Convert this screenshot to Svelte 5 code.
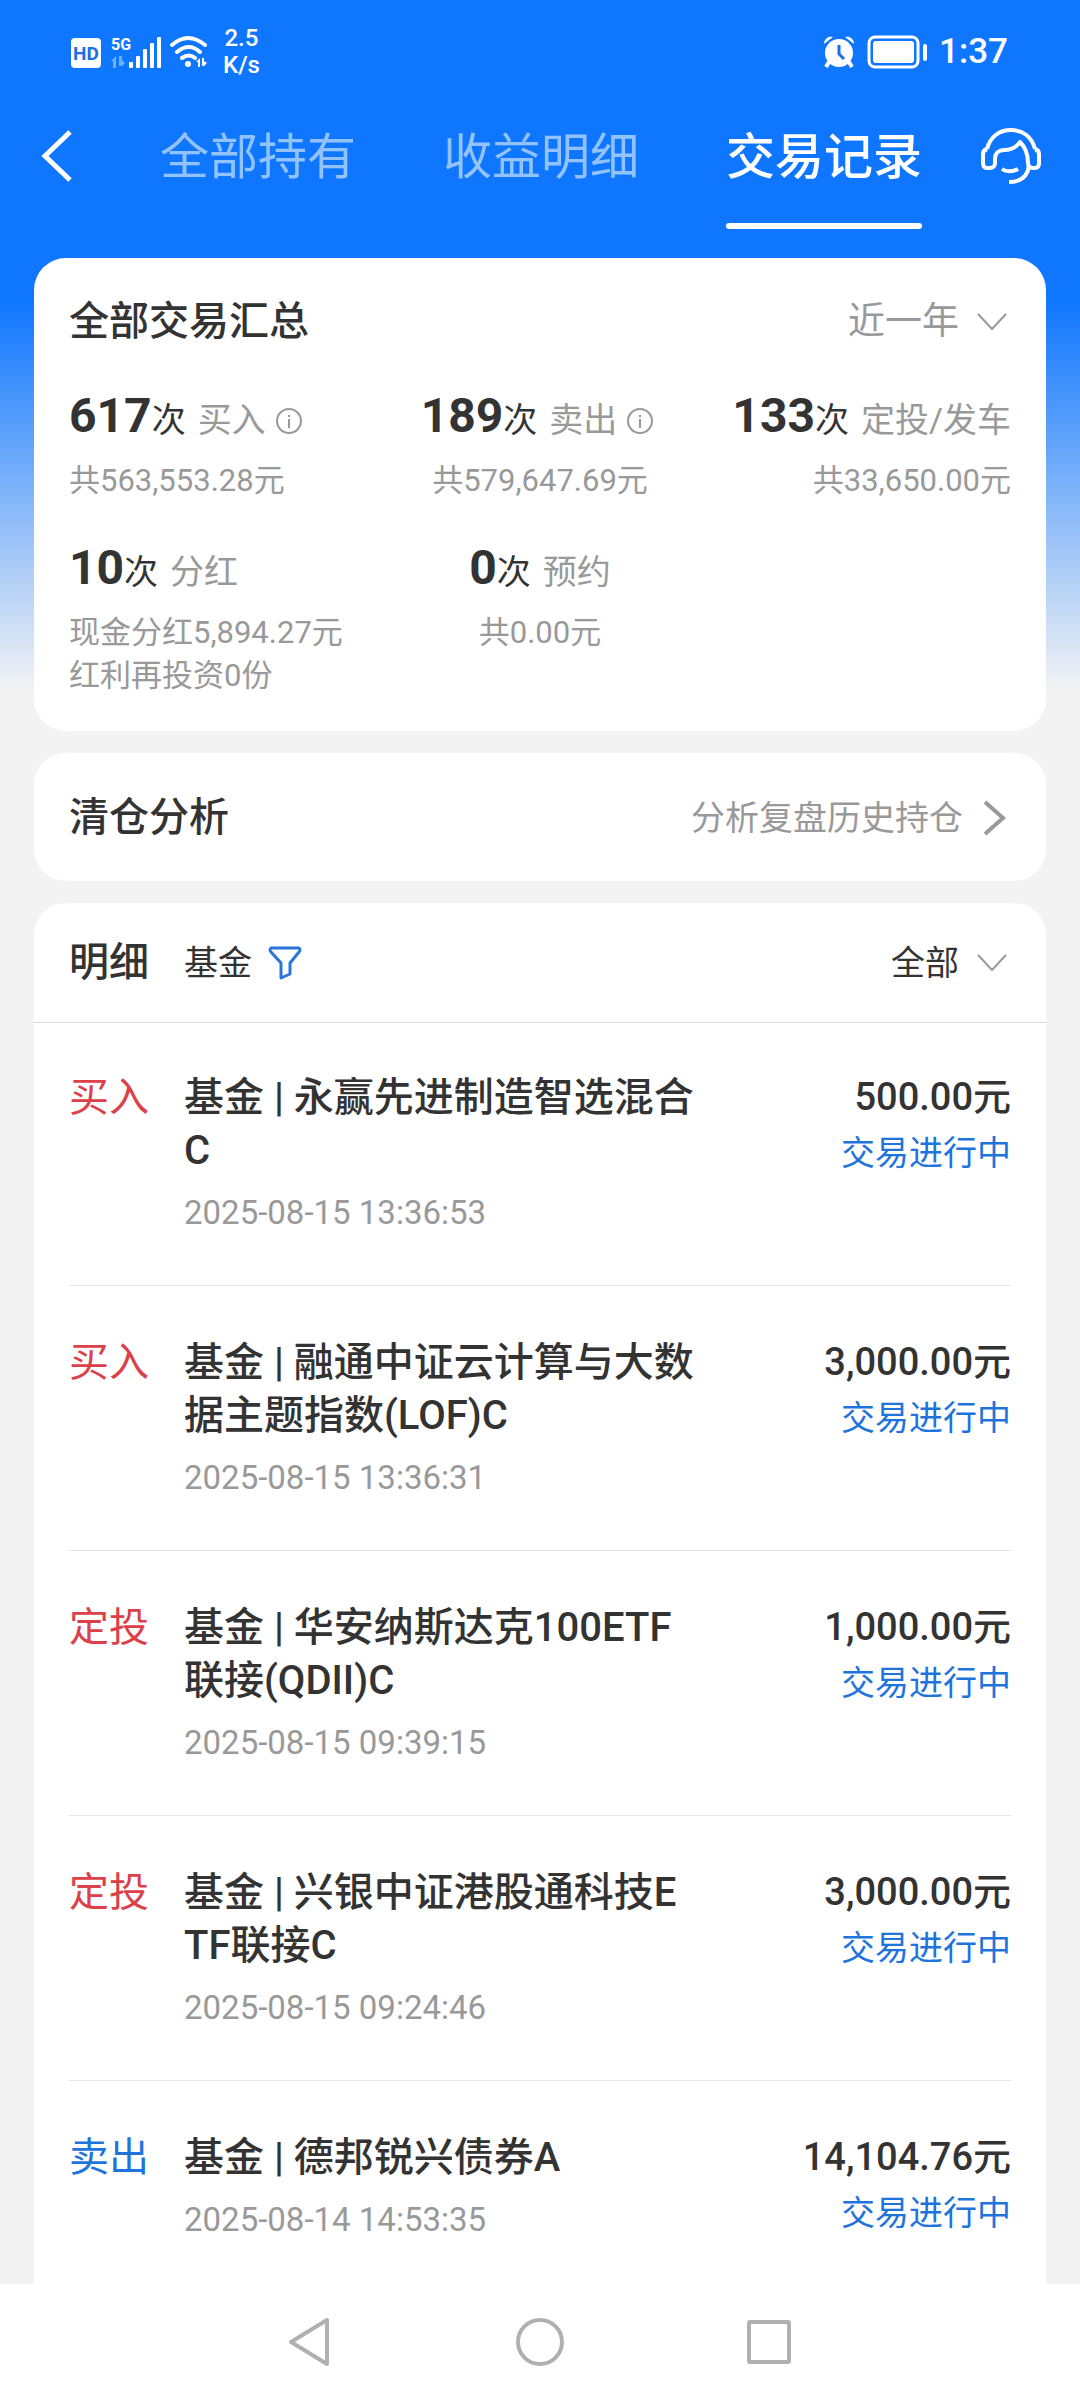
<script lang="ts">
	type Stat = { count: number; label: string; lines: string[]; info?: boolean };
	type Trade = { kind: string; name: string; time: string; amount: string; sell?: boolean };

	const tabs = ['全部持有', '收益明细', '交易记录'];
	let active = $state('交易记录');
	let range = $state('近一年');
	let filter = $state('全部');

	const stats: Stat[] = [
		{ count: 617, label: '买入', lines: ['共563,553.28元'], info: true },
		{ count: 189, label: '卖出', lines: ['共579,647.69元'], info: true },
		{ count: 133, label: '定投/发车', lines: ['共33,650.00元'] },
		{ count: 10, label: '分红', lines: ['现金分红5,894.27元', '红利再投资0份'] },
		{ count: 0, label: '预约', lines: ['共0.00元'] }
	];

	const trades: Trade[] = [
		{ kind: '买入', name: '永赢先进制造智选混合C', time: '2025-08-15 13:36:53', amount: '500.00' },
		{ kind: '买入', name: '融通中证云计算与大数据主题指数(LOF)C', time: '2025-08-15 13:36:31', amount: '3,000.00' },
		{ kind: '定投', name: '华安纳斯达克100ETF联接(QDII)C', time: '2025-08-15 09:39:15', amount: '1,000.00' },
		{ kind: '定投', name: '兴银中证港股通科技ETF联接C', time: '2025-08-15 09:24:46', amount: '3,000.00' },
		{ kind: '卖出', name: '德邦锐兴债券A', time: '2025-08-14 14:53:35', amount: '14,104.76', sell: true }
	];
</script>

{#snippet chevronDown()}
	<svg width="30" height="18" viewBox="0 0 30 18" fill="none" stroke="#999" stroke-width="2"><path d="M1 1l14 15L29 1" /></svg>
{/snippet}

<div class="page">
	<div class="status">
		<div class="status-side">
			<svg width="138" height="34" viewBox="0 0 138 34" fill="#fff">
				<rect x="0" y="3" width="30" height="30" rx="4" />
				<text x="15" y="25" text-anchor="middle" font-size="19" font-weight="700" fill="#1a6fe8">HD</text>
				<text x="40" y="15" font-size="16" font-weight="700">5G</text>
				<g fill="#6db0ff"><path d="M45 21v12h-3v-7h-2zM48 21h3v4l3 3-3 3h-3z" /></g>
				<rect x="58" y="27" width="4" height="6" rx="1" /><rect x="65" y="21" width="4" height="12" rx="1" />
				<rect x="72" y="14" width="4" height="19" rx="1" /><rect x="79" y="8" width="4" height="25" rx="1" />
				<rect x="86" y="2" width="4" height="31" rx="1" />
				<g fill="none" stroke="#fff" stroke-width="4" stroke-linecap="round">
					<path d="M101 10q16-14 33 0M106 17q12-10 23 0M111 23q7-5 13 0" />
				</g>
				<circle cx="117" cy="29" r="3" />
				<path d="M129 23v9h-2v-5h-2zM131 23h2v3l3 2-3 3h-2z" />
			</svg>
			<div class="speed"><span>2.5</span><span>K/s</span></div>
		</div>
		<div class="status-side right">
			<svg width="32" height="32" viewBox="0 0 32 32" fill="#fff">
				<circle cx="16" cy="17" r="14" />
				<path d="M1 8a7 7 0 0 1 9-7zM31 8a7 7 0 0 0-9-7z" />
				<path d="M6 26l-3 5M26 26l3 5" stroke="#fff" stroke-width="4" />
				<path d="M16 9v9l5 5" fill="none" stroke="#1a6fe8" stroke-width="3" />
			</svg>
			<svg width="60" height="34" viewBox="0 0 60 34" fill="#fff">
				<rect x="2" y="2" width="49" height="30" rx="6" fill="none" stroke="#fff" stroke-width="3" />
				<rect x="6" y="6" width="41" height="22" rx="3" />
				<rect x="56" y="9" width="4" height="17" rx="2" />
			</svg>
			<span class="clock">1:37</span>
		</div>
	</div>

	<header class="topbar">
		<button class="icon-btn" aria-label="返回">
			<svg width="31" height="52" viewBox="0 0 31 52" fill="none" stroke="#fff" stroke-width="5"><path d="M29 2L4 26l25 24" /></svg>
		</button>
		<nav class="tabs">
			{#each tabs as tab}
				<button class="tab" class:active={tab === active} onclick={() => (active = tab)}>{tab}</button>
			{/each}
		</nav>
		<button class="icon-btn" aria-label="客服">
			<svg width="60" height="58" viewBox="0 0 60 58" fill="none" stroke="#fff" stroke-width="4" stroke-linejoin="round">
				<path d="M6 22C9 10 18 3 30 3s21 7 24 19" />
				<path d="M6 22c-3 1-4 3-4 5v9c0 3 1 5 4 5h3c3 0 5-2 5-5v-4c0-6 4-9 9-9 7 0 12-2 16-8 5 5 8 11 8 21 0 3 2 5 5 5h2c3 0 4-2 4-5v-9c0-2-1-4-4-5" />
				<path d="M48 38c-1 11-8 17-20 17M21 42c4 3 11 3 16 0" />
			</svg>
		</button>
	</header>

	<section class="card summary">
		<div class="card-head">
			<h2>全部交易汇总</h2>
			<label class="picker muted">
				<select bind:value={range} aria-label="时间范围">
					<option>近一年</option>
					<option>近三年</option>
				</select>
				{@render chevronDown()}
			</label>
		</div>
		<div class="stats">
			{#each stats as s}
				<div class="stat">
					<div class="stat-head">
						<b>{s.count}</b><span class="unit">次</span><span class="label">{s.label}</span>
						{#if s.info}
							<button class="info" aria-label="{s.label}说明">
								<svg width="26" height="26" viewBox="0 0 26 26" fill="none" stroke="#999" stroke-width="2">
									<circle cx="13" cy="13" r="12" /><path d="M13 11v9M13 7v2" />
								</svg>
							</button>
						{/if}
					</div>
					{#each s.lines as line}
						<div class="stat-line">{line}</div>
					{/each}
				</div>
			{/each}
		</div>
	</section>

	<a class="card analysis" href="#analysis">
		<h2>清仓分析</h2>
		<span class="more">
			分析复盘历史持仓
			<svg width="24" height="36" viewBox="0 0 24 36" fill="none" stroke="#999" stroke-width="4"><path d="M2 2l18 16L2 34" /></svg>
		</span>
	</a>

	<section class="card detail">
		<div class="detail-head">
			<h2>明细</h2>
			<button class="fund">
				基金
				<svg width="34" height="34" viewBox="0 0 34 34" fill="none" stroke="#2b74dc" stroke-width="3" stroke-linejoin="round">
					<path d="M3 2h28q2 2 0 4L22 17v11l-9 4V17L3 6Q1 4 3 2z" />
				</svg>
			</button>
			<label class="picker">
				<select bind:value={filter} aria-label="交易类型">
					<option>全部</option>
					<option>买入</option>
					<option>卖出</option>
				</select>
				{@render chevronDown()}
			</label>
		</div>
		<ul>
			{#each trades as t}
				<li>
					<span class="kind" class:sell={t.sell}>{t.kind}</span>
					<div class="info-col">
						<div class="name">基金 | {t.name}</div>
						<time>{t.time}</time>
					</div>
					<div class="sum">
						<div class="amount">{t.amount}元</div>
						<div class="state">交易进行中</div>
					</div>
				</li>
			{/each}
		</ul>
	</section>

	<nav class="sysnav">
		<button aria-label="返回上一页"><svg width="48" height="52" viewBox="0 0 48 52"><path d="M41 4v44L5 26z" /></svg></button>
		<button aria-label="主屏幕"><svg width="48" height="52" viewBox="0 0 48 52"><circle cx="24" cy="26" r="22" /></svg></button>
		<button aria-label="最近任务"><svg width="48" height="52" viewBox="0 0 48 52"><rect x="3" y="6" width="40" height="40" rx="1" /></svg></button>
	</nav>
</div>

<style>
	:global(body) { margin: 0; background: #f3f3f3; }
	.page { min-height: 100vh; display: flex; flex-direction: column; background: linear-gradient(#0f76ff 0, #0f76ff 300px, #f3f3f3 690px); font-family: Roboto, "Noto Sans CJK SC", sans-serif; color: #333; }
	svg { display: block; flex: none; }
	button, select { font: inherit; color: inherit; background: none; border: none; padding: 0; margin: 0; cursor: pointer; }
	h2 { margin: 0; font-size: 40px; line-height: 56px; font-weight: 500; }

	.status { height: 104px; padding: 0 72px 0 71px; display: flex; align-items: center; justify-content: space-between; color: #fff; }
	.status-side { display: flex; align-items: center; gap: 14px; }
	.right { gap: 12px; }
	.speed { display: flex; flex-direction: column; align-items: center; font-size: 24px; line-height: 27px; font-weight: 500; }
	.clock { font-size: 35px; line-height: 40px; font-weight: 500; }

	.topbar { display: flex; align-items: flex-start; padding: 17px 39px 29px 41px; color: #fff; }
	.icon-btn { height: 70px; display: flex; align-items: center; }
	.tabs { flex: 1; margin: 0 59px 0 88px; display: flex; justify-content: space-between; }
	.tab { font-size: 49px; line-height: 74px; color: #93c3ff; }
	.tab::after { content: ''; display: block; height: 6px; margin-top: 28px; border-radius: 3px; }
	.tab.active { color: #fff; font-weight: 500; }
	.tab.active::after { background: #fff; }

	.card { margin: 0 34px 22px; background: #fff; border-radius: 32px; }
	.summary { padding: 36px 35px 34px; }
	.card-head { display: flex; align-items: center; justify-content: space-between; margin-bottom: 34px; }
	.picker { display: flex; align-items: center; gap: 18px; margin-right: 4px; font-size: 34px; line-height: 56px; }
	.picker select { appearance: none; outline: none; }
	.muted { color: #999; font-size: 37px; }

	.stats { display: grid; grid-template-columns: repeat(3, 1fr); row-gap: 34px; }
	.stat { display: flex; flex-direction: column; white-space: nowrap; }
	.stat:nth-child(3n + 2) { align-items: center; }
	.stat:nth-child(3n) { align-items: flex-end; }
	.stat-head { display: flex; align-items: baseline; margin-bottom: 11px; line-height: 40px; font-size: 34px; }
	.stat-head b { font-size: 48px; line-height: 64px; font-weight: 700; }
	.label { margin-left: 12px; color: #999; }
	.info { margin: 10px 6px 0 10px; align-self: center; }
	.stat-line { font-size: 31px; line-height: 43px; color: #999; }

	.analysis { display: flex; align-items: center; justify-content: space-between; padding: 37px 35px 35px; color: inherit; text-decoration: none; }
	.more { display: flex; align-items: center; gap: 20px; margin-right: 4px; font-size: 34px; line-height: 56px; color: #999; }

	.detail { flex: 1; margin-bottom: 0; border-radius: 32px 32px 0 0; }
	.detail-head { display: flex; align-items: center; padding: 32px 35px 31px; border-bottom: 1px solid #ddd; }
	.fund { display: flex; align-items: center; gap: 16px; margin: 0 auto 0 35px; font-size: 34px; line-height: 56px; }
	ul { list-style: none; margin: 0; padding: 0 35px; }
	li { display: flex; padding: 50px 0; border-bottom: 1px solid #e5e5e5; }
	li:first-child { padding-top: 48px; }
	li:last-child { padding-bottom: 36px; border-bottom: none; }
	.kind { width: 115px; flex: none; font-size: 40px; line-height: 53px; color: #dc4048; }
	.kind.sell { color: #1f74dc; }
	.info-col { width: 514px; }
	.name { font-size: 40px; line-height: 53px; font-weight: 500; word-break: break-all; }
	time { display: block; margin-top: 14px; font-size: 33px; line-height: 44px; color: #999; }
	.sum { margin-left: auto; text-align: right; white-space: nowrap; }
	.amount { font-size: 38px; line-height: 53px; font-weight: 500; }
	.state { margin-top: 3px; font-size: 34px; line-height: 53px; color: #1f74dc; }

	.sysnav { height: 116px; display: flex; align-items: center; justify-content: center; gap: 182px; background: #fff; }
	.sysnav svg { fill: none; stroke: #b0b0b0; stroke-width: 4; stroke-linejoin: round; }
</style>
